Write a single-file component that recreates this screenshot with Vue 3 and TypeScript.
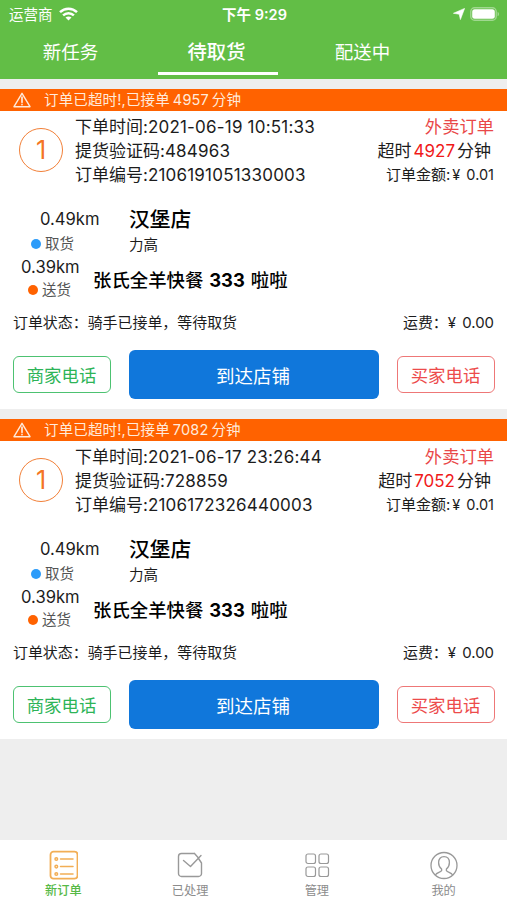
<script setup lang="ts">
interface Order {
  accepted: number
  overdue: number
  seq: number
  time: string
  code: string
  orderNo: string
}

const tabs: string[] = ['新任务', '待取货', '配送中']
const activeTab = 1

const orders: Order[] = [
  { accepted: 4957, overdue: 4927, seq: 1, time: '2021-06-19 10:51:33', code: '484963', orderNo: '2106191051330003' },
  { accepted: 7082, overdue: 7052, seq: 1, time: '2021-06-17 23:26:44', code: '728859', orderNo: '2106172326440003' },
]
</script>

<template>
  <div class="page">
    <header class="header">
      <div class="status">
        <div class="carrier">
          <span>运营商</span>
          <svg width="19" height="14" viewBox="0 0 19 14" fill="none" stroke="#fff" stroke-width="2.5">
            <path d="M1 5.2C5.8.6 13.200.6 18 5.200" />
            <path d="M4.100 8.300c3.100-2.900 7.700-2.900 10.800 0" />
            <path d="M9.500 13.600 6.500 10.600c1.700-1.500 4.300-1.500 6 0z" fill="#fff" stroke="none" />
          </svg>
        </div>
        <div class="clock">下午 9:29</div>
        <div class="power">
          <svg class="locate" width="12" height="12" viewBox="0 0 12 12"><path d="M11.600.4 7.400 11.600 6.200 6.200.4 5.300z" fill="#fff" stroke="#fff" stroke-width=".6" stroke-linejoin="round" /></svg>
          <svg width="30" height="14" viewBox="0 0 30 14">
            <rect x=".8" y=".8" width="25.400" height="12.400" rx="3.800" fill="none" stroke="#fff" stroke-opacity=".4" stroke-width="1.400" />
            <rect x="2.200" y="2.200" width="22.600" height="9.600" rx="2.500" fill="#fff" />
            <path d="M27.600 4.700c1.800.8 1.800 3.800 0 4.600z" fill="#fff" fill-opacity=".45" />
          </svg>
        </div>
      </div>
      <nav class="tabs">
        <div v-for="(tab, i) in tabs" :key="tab" class="tab" :class="{ active: i === activeTab }">{{ tab }}</div>
      </nav>
    </header>

    <main class="list">
      <article v-for="order in orders" :key="order.orderNo" class="card">
        <div class="alert">
          <svg width="18" height="16" viewBox="0 0 18 16" fill="none" stroke="#ffeadb" stroke-width="1.400" stroke-linejoin="round" stroke-linecap="round">
            <path d="M9 1.300 17 14.700H1z" />
            <path d="M9 5v5.200M9 12.400v.2" stroke-width="1.700" />
          </svg>
          <span>订单已超时!,已接单<i>{{ order.accepted }}</i>分钟</span>
        </div>
        <section class="summary">
          <div class="seq">{{ order.seq }}</div>
          <div class="facts">
            <div>下单时间:<span class="num">{{ order.time }}</span></div>
            <div>提货验证码:<span class="num">{{ order.code }}</span></div>
            <div>订单编号:<span class="num">{{ order.orderNo }}</span></div>
          </div>
          <div class="side">
            <div class="kind">外卖订单</div>
            <div class="late">超时<b>{{ order.overdue }}</b>分钟</div>
            <div class="amount">订单金额:<span class="money">¥ 0.01</span></div>
          </div>
        </section>
        <section class="stop pickup">
          <div class="distance">
            <div class="km">0.49km</div>
            <div class="mark"><span class="dot"></span>取货</div>
          </div>
          <div class="place">
            <div class="shop">汉堡店</div>
            <div class="address">力高</div>
          </div>
        </section>
        <section class="stop delivery">
          <div class="distance">
            <div class="km">0.39km</div>
            <div class="mark"><span class="dot"></span>送货</div>
          </div>
          <div class="customer">张氏全羊快餐 <b>333</b> 啦啦</div>
        </section>
        <section class="state">
          <span>订单状态：骑手已接单，等待取货</span>
          <span class="fee">运费：<span class="money">¥ 0.00</span></span>
        </section>
        <section class="actions">
          <button class="phone seller">商家电话</button>
          <button class="arrive">到达店铺</button>
          <button class="phone buyer">买家电话</button>
        </section>
      </article>
    </main>

    <footer class="bar">
      <div class="item current">
        <svg width="30" height="30" viewBox="0 0 30 30" fill="none" stroke="#f2ae55" stroke-width="1.500" stroke-linecap="round">
          <rect x="2.500" y="1.700" width="27" height="27" rx="3" stroke-width="1.800" />
          <circle cx="8.300" cy="9" r="1.300" /><circle cx="8.300" cy="16.600" r="1.300" /><circle cx="8.300" cy="24" r="1.300" />
          <path d="M12.500 9h12.500M12.500 16.600h12.500M12.500 24h12.500" />
        </svg>
        <span>新订单</span>
      </div>
      <div class="item">
        <svg width="30" height="30" viewBox="0 0 30 30" fill="none" stroke="#999" stroke-width="1.400" stroke-linecap="round" stroke-linejoin="round">
          <path d="M19.500 3.500H6.500a3 3 0 0 0-3 3v17a3 3 0 0 0 3 3h17a3 3 0 0 0 3-3V13l-3-4.500M19.500 3.500l4 4.500" />
          <path d="M8.500 10.500l7 6L26 5.500" />
        </svg>
        <span>已处理</span>
      </div>
      <div class="item">
        <svg width="30" height="30" viewBox="0 0 30 30" fill="none" stroke="#999" stroke-width="1.200">
          <rect x="4" y="4" width="9.500" height="9.500" rx="2" /><rect x="17" y="4" width="9.500" height="9.500" rx="2" />
          <rect x="4" y="17" width="9.500" height="9.500" rx="2" /><rect x="17" y="17" width="9.500" height="9.500" rx="2" />
        </svg>
        <span>管理</span>
      </div>
      <div class="item">
        <svg width="30" height="30" viewBox="0 0 30 30" fill="none" stroke="#999" stroke-width="1.300" stroke-linejoin="round">
          <circle cx="15" cy="15.500" r="13" />
          <path d="M6.300 25c1.600-2.500 4.900-2.500 6.300-4.300v-1.600c-2.100-1.700-3-4-3-6.600 0-3.600 2-5.900 5.400-5.900s5.400 2.300 5.400 5.900c0 2.600-.9 4.900-3 6.600v1.600c1.400 1.800 4.700 1.800 6.300 4.300" />
        </svg>
        <span>我的</span>
      </div>
    </footer>
  </div>
</template>

<style>
body {
  margin: 0;
}
</style>

<style scoped>
.page {
  display: flex;
  flex-direction: column;
  width: 507px;
  height: 900px;
  overflow: hidden;
  background: #eee;
  color: #1c1c1c;
  font-family: Inter, "Noto Sans CJK SC", sans-serif;
  white-space: nowrap;
}

.header {
  height: 79px;
  background: #62be46;
  color: #fff;
}

.status {
  display: grid;
  grid-template-columns: 1fr auto 1fr;
  align-items: center;
  height: 27px;
  padding: 0 7px 0 9px;
  font-size: 14.500px;
}

.carrier,
.power {
  display: flex;
  align-items: center;
}

.carrier {
  gap: 6px;
}

.clock {
  font-weight: 600;
}

.power {
  justify-content: flex-end;
  gap: 5px;
}

.tabs {
  display: grid;
  grid-template-columns: repeat(3, 120px);
  column-gap: 26px;
  height: 48px;
  padding-left: 12px;
}

.tab {
  box-sizing: border-box;
  height: 48px;
  padding-right: 3px;
  border-bottom: 3px solid transparent;
  font-size: 18.500px;
  line-height: 51px;
  text-align: center;
}

.tab.active {
  border-color: #fff;
  font-size: 19.300px;
  font-weight: 500;
}

.list {
  display: flex;
  flex: 1;
  flex-direction: column;
  gap: 10px;
  padding-top: 10px;
}

.card {
  height: 320px;
  background: #fff;
}

.alert {
  display: flex;
  align-items: center;
  gap: 13px;
  height: 22px;
  padding-left: 13px;
  background: #ff6200;
  color: #ffeadb;
  font-size: 14.500px;
  letter-spacing: 0.150px;
  line-height: 22px;
}

.alert i {
  margin: 0 3px;
  font-style: normal;
}

.summary {
  display: flex;
  height: 82px;
  padding: 4px 13px 0 19px;
  box-sizing: border-box;
}

.seq {
  box-sizing: border-box;
  width: 44px;
  height: 44px;
  margin: 13px 12px 0 0;
  border: 1.500px solid #f28038;
  border-radius: 50%;
  color: #f47524;
  font-size: 25px;
  line-height: 42px;
  text-align: center;
}

.facts {
  flex: 1;
  font-size: 17px;
  line-height: 24px;
}

.num {
  letter-spacing: 0.200px;
}

.side {
  font-size: 17px;
  line-height: 24px;
  text-align: right;
}

.kind {
  color: #e94848;
  font-size: 17.300px;
}

.late {
  padding-right: 3px;
}

.late b {
  margin: 0 2px;
  color: #f01919;
  font-weight: 400;
}

.amount {
  font-size: 15px;
}

.amount .money {
  margin-left: 2px;
  font-size: 14.500px;
}

.money {
  word-spacing: 2px;
}

.stop {
  display: flex;
}

.pickup {
  height: 62px;
  padding-left: 31px;
  box-sizing: border-box;
  padding-top: 14px;
}

.pickup .distance {
  width: 98px;
}

.pickup .km {
  padding-left: 9px;
}

.km {
  font-size: 16.600px;
  line-height: 24px;
}

.mark {
  display: flex;
  align-items: center;
  gap: 4px;
  color: #555;
  font-size: 14.500px;
  line-height: 25px;
}

.dot {
  width: 10px;
  height: 10px;
  border-radius: 50%;
  background: #2c9cfa;
}

.shop {
  color: #000;
  font-size: 20.700px;
  font-weight: 500;
  line-height: 26px;
}

.address {
  font-size: 14.500px;
  line-height: 24px;
}

.delivery {
  height: 46px;
  padding-left: 21px;
}

.delivery .distance {
  width: 72px;
}

.delivery .mark {
  padding-left: 7px;
  line-height: 22px;
}

.delivery .dot {
  background: #ff6200;
}

.customer {
  color: #000;
  font-size: 18.400px;
  font-weight: 500;
  line-height: 51px;
  word-spacing: 1px;
}

.customer b {
  font-weight: 700;
}

.state {
  display: flex;
  justify-content: space-between;
  height: 49px;
  padding: 10px 13px 0;
  box-sizing: border-box;
  font-size: 14.950px;
  line-height: 24px;
}

.actions {
  display: grid;
  grid-template-columns: 98px 250px 98px;
  justify-content: space-between;
  align-items: center;
  height: 49px;
  padding: 0 12px 0 13px;
}

.actions button {
  border-radius: 6px;
  font-family: inherit;
}

.phone {
  height: 37px;
  padding: 0 1px 0 0;
  border: 1.500px solid;
  background: #fff;
  font-size: 17.400px;
}

.seller {
  border-color: #4dc271;
  color: #2db457;
}

.buyer {
  border-color: #ee7777;
  color: #ed4b4b;
}

.arrive {
  height: 49px;
  padding: 0 2px 0 0;
  border: 0;
  background: #1077db;
  color: #fff;
  font-size: 18.500px;
}

.bar {
  display: grid;
  grid-template-columns: repeat(4, 1fr);
  height: 60px;
  background: #fff;
}

.item {
  display: flex;
  flex-direction: column;
  align-items: center;
  padding-top: 10px;
  color: #8c8c8c;
  font-size: 12.200px;
  line-height: 22px;
}

.item.current {
  color: #56b946;
  font-weight: 500;
}
</style>
